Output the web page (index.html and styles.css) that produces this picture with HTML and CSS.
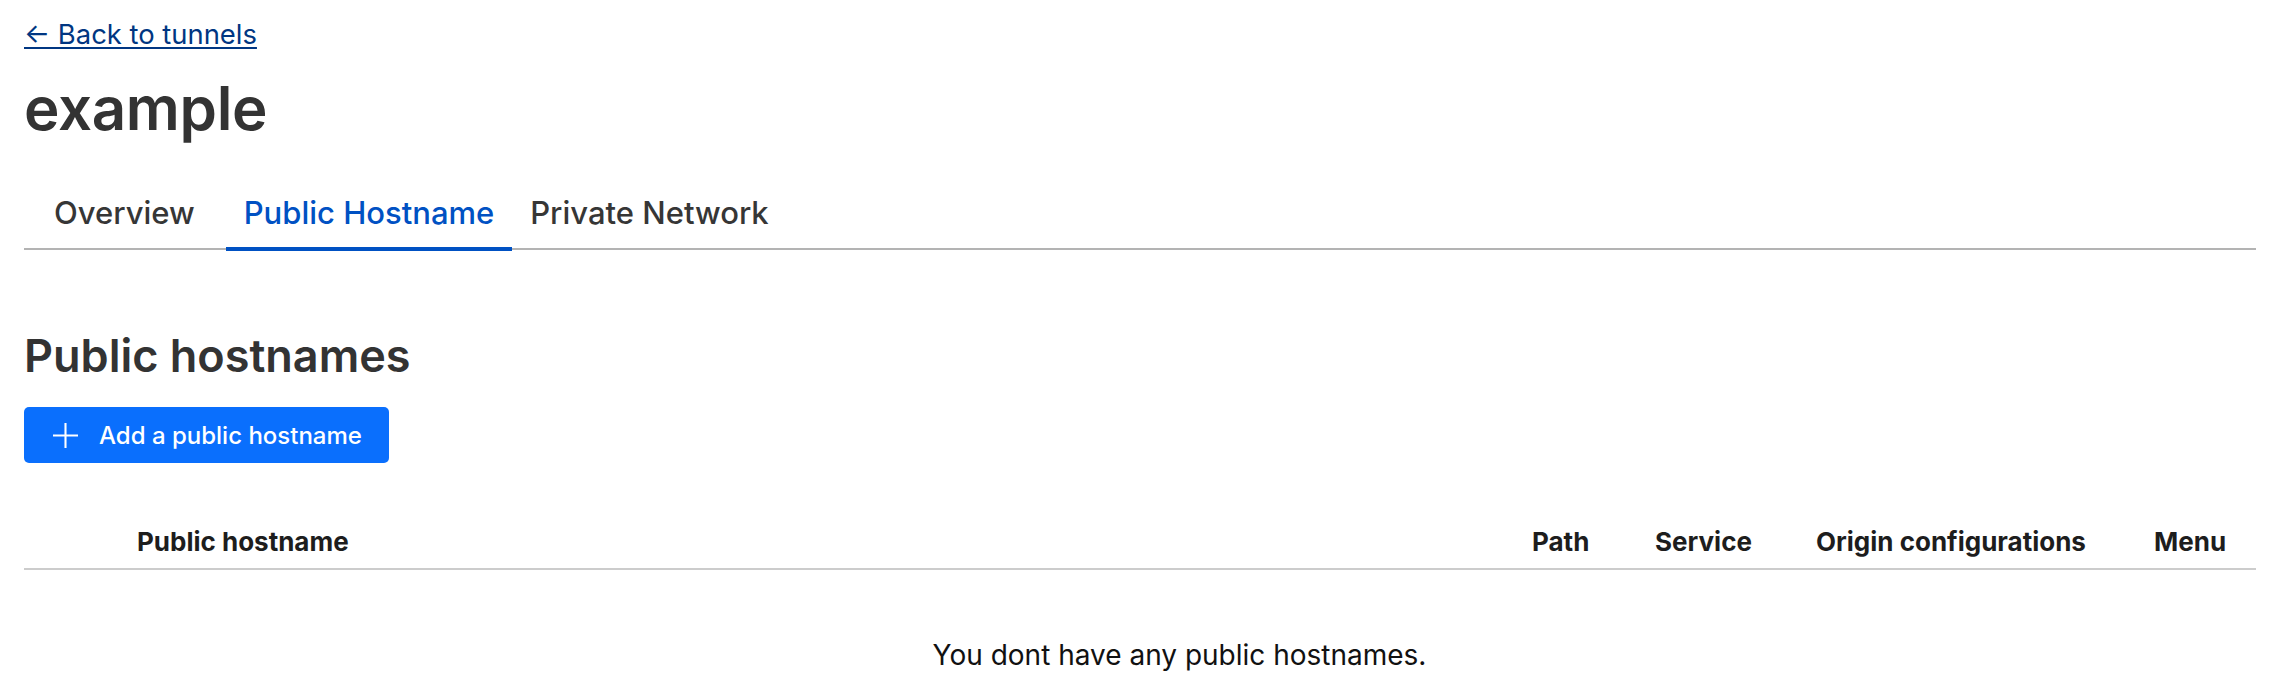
FILE: index.html
```html
<!DOCTYPE html>
<html lang="en">

<head>
    <meta charset="UTF-8">
    <meta name="viewport" content="width=device-width, initial-scale=1.0">
    <title>example - Tunnel</title>
    <link rel="stylesheet" href="styles.css">
</head>

<body>
    <a class="back-link" href="#">&larr; Back to tunnels</a>
    <h1 class="page-title">example</h1>

    <nav class="tab-list">
        <a class="tab" href="#">Overview</a>
        <a class="tab active" href="#">Public Hostname</a>
        <a class="tab" href="#">Private Network</a>
    </nav>

    <section class="hostnames">
        <h2 class="section-title">Public hostnames</h2>
        <button class="add-button" type="button">
            <svg class="add-icon" xmlns="http://www.w3.org/2000/svg" fill="none" viewBox="0 0 24 24"
                stroke="currentColor">
                <path stroke-width="2" d="M12 0v24M0 12h24" />
            </svg>
            Add a public hostname
        </button>

        <div class="hostname-table">
            <div class="table-head">
                <div class="cell"></div>
                <div class="cell">Public hostname</div>
                <div class="cell">Path</div>
                <div class="cell">Service</div>
                <div class="cell">Origin configurations</div>
                <div class="cell">Menu</div>
            </div>
            <div class="table-empty">You dont have any public hostnames.</div>
        </div>
    </section>
</body>

</html>
```

FILE: styles.css
```css
body {
    margin: 0;
    padding: 17px 28px 0 24px;
    background: white;
    font-family: Inter, "Noto Sans", sans-serif;
    color: #333;
}

.back-link {
    display: inline-block;
    font-size: 27.4px;
    line-height: 34px;
    color: #003682;
    text-decoration: underline;
    text-underline-offset: 3px;
    text-decoration-thickness: 2px;
}

.page-title {
    margin: 21px 0 0;
    font-size: 60px;
    line-height: 72px;
    font-weight: 600;
    letter-spacing: -0.3px;
    color: #333;
}

.tab-list {
    display: flex;
    margin-top: 49px;
    padding-left: 12px;
    border-bottom: 2px solid #b3b3b3;
}

.tab {
    padding: 0 18px 14px;
    margin-bottom: -3px;
    font-size: 31px;
    line-height: 40px;
    font-weight: 500;
    color: #363636;
    text-decoration: none;
    border-bottom: 4px solid transparent;
}

.tab:first-child {
    margin-right: 13px;
}

.tab.active {
    color: #0051c3;
    border-bottom-color: #0051c3;
}

.section-title {
    margin: 79px 0 0;
    font-size: 45px;
    line-height: 54px;
    font-weight: 600;
    color: #333;
}

.add-button {
    display: flex;
    align-items: center;
    gap: 21px;
    height: 56px;
    margin-top: 24px;
    padding: 0 27px 0 29px;
    border: none;
    border-radius: 5px;
    background: #0a6ffd;
    color: white;
    font-family: inherit;
    font-size: 24px;
    font-weight: 500;
}

.add-icon {
    width: 25px;
    height: 25px;
    flex-shrink: 0;
}

.hostname-table {
    margin-top: 63px;
}

.table-head {
    display: grid;
    grid-template-columns: 89px 1fr 123px 161px 338px 126px;
    border-bottom: 2px solid #cccccc;
    font-size: 26px;
    line-height: 32px;
    font-weight: 700;
    color: #1d1d1d;
}

.table-head .cell {
    padding: 0 0 10px 24px;
}

.table-empty {
    padding: 68px 0 0 79px;
    text-align: center;
    font-size: 28px;
    line-height: 34px;
    color: #111;
}
```
